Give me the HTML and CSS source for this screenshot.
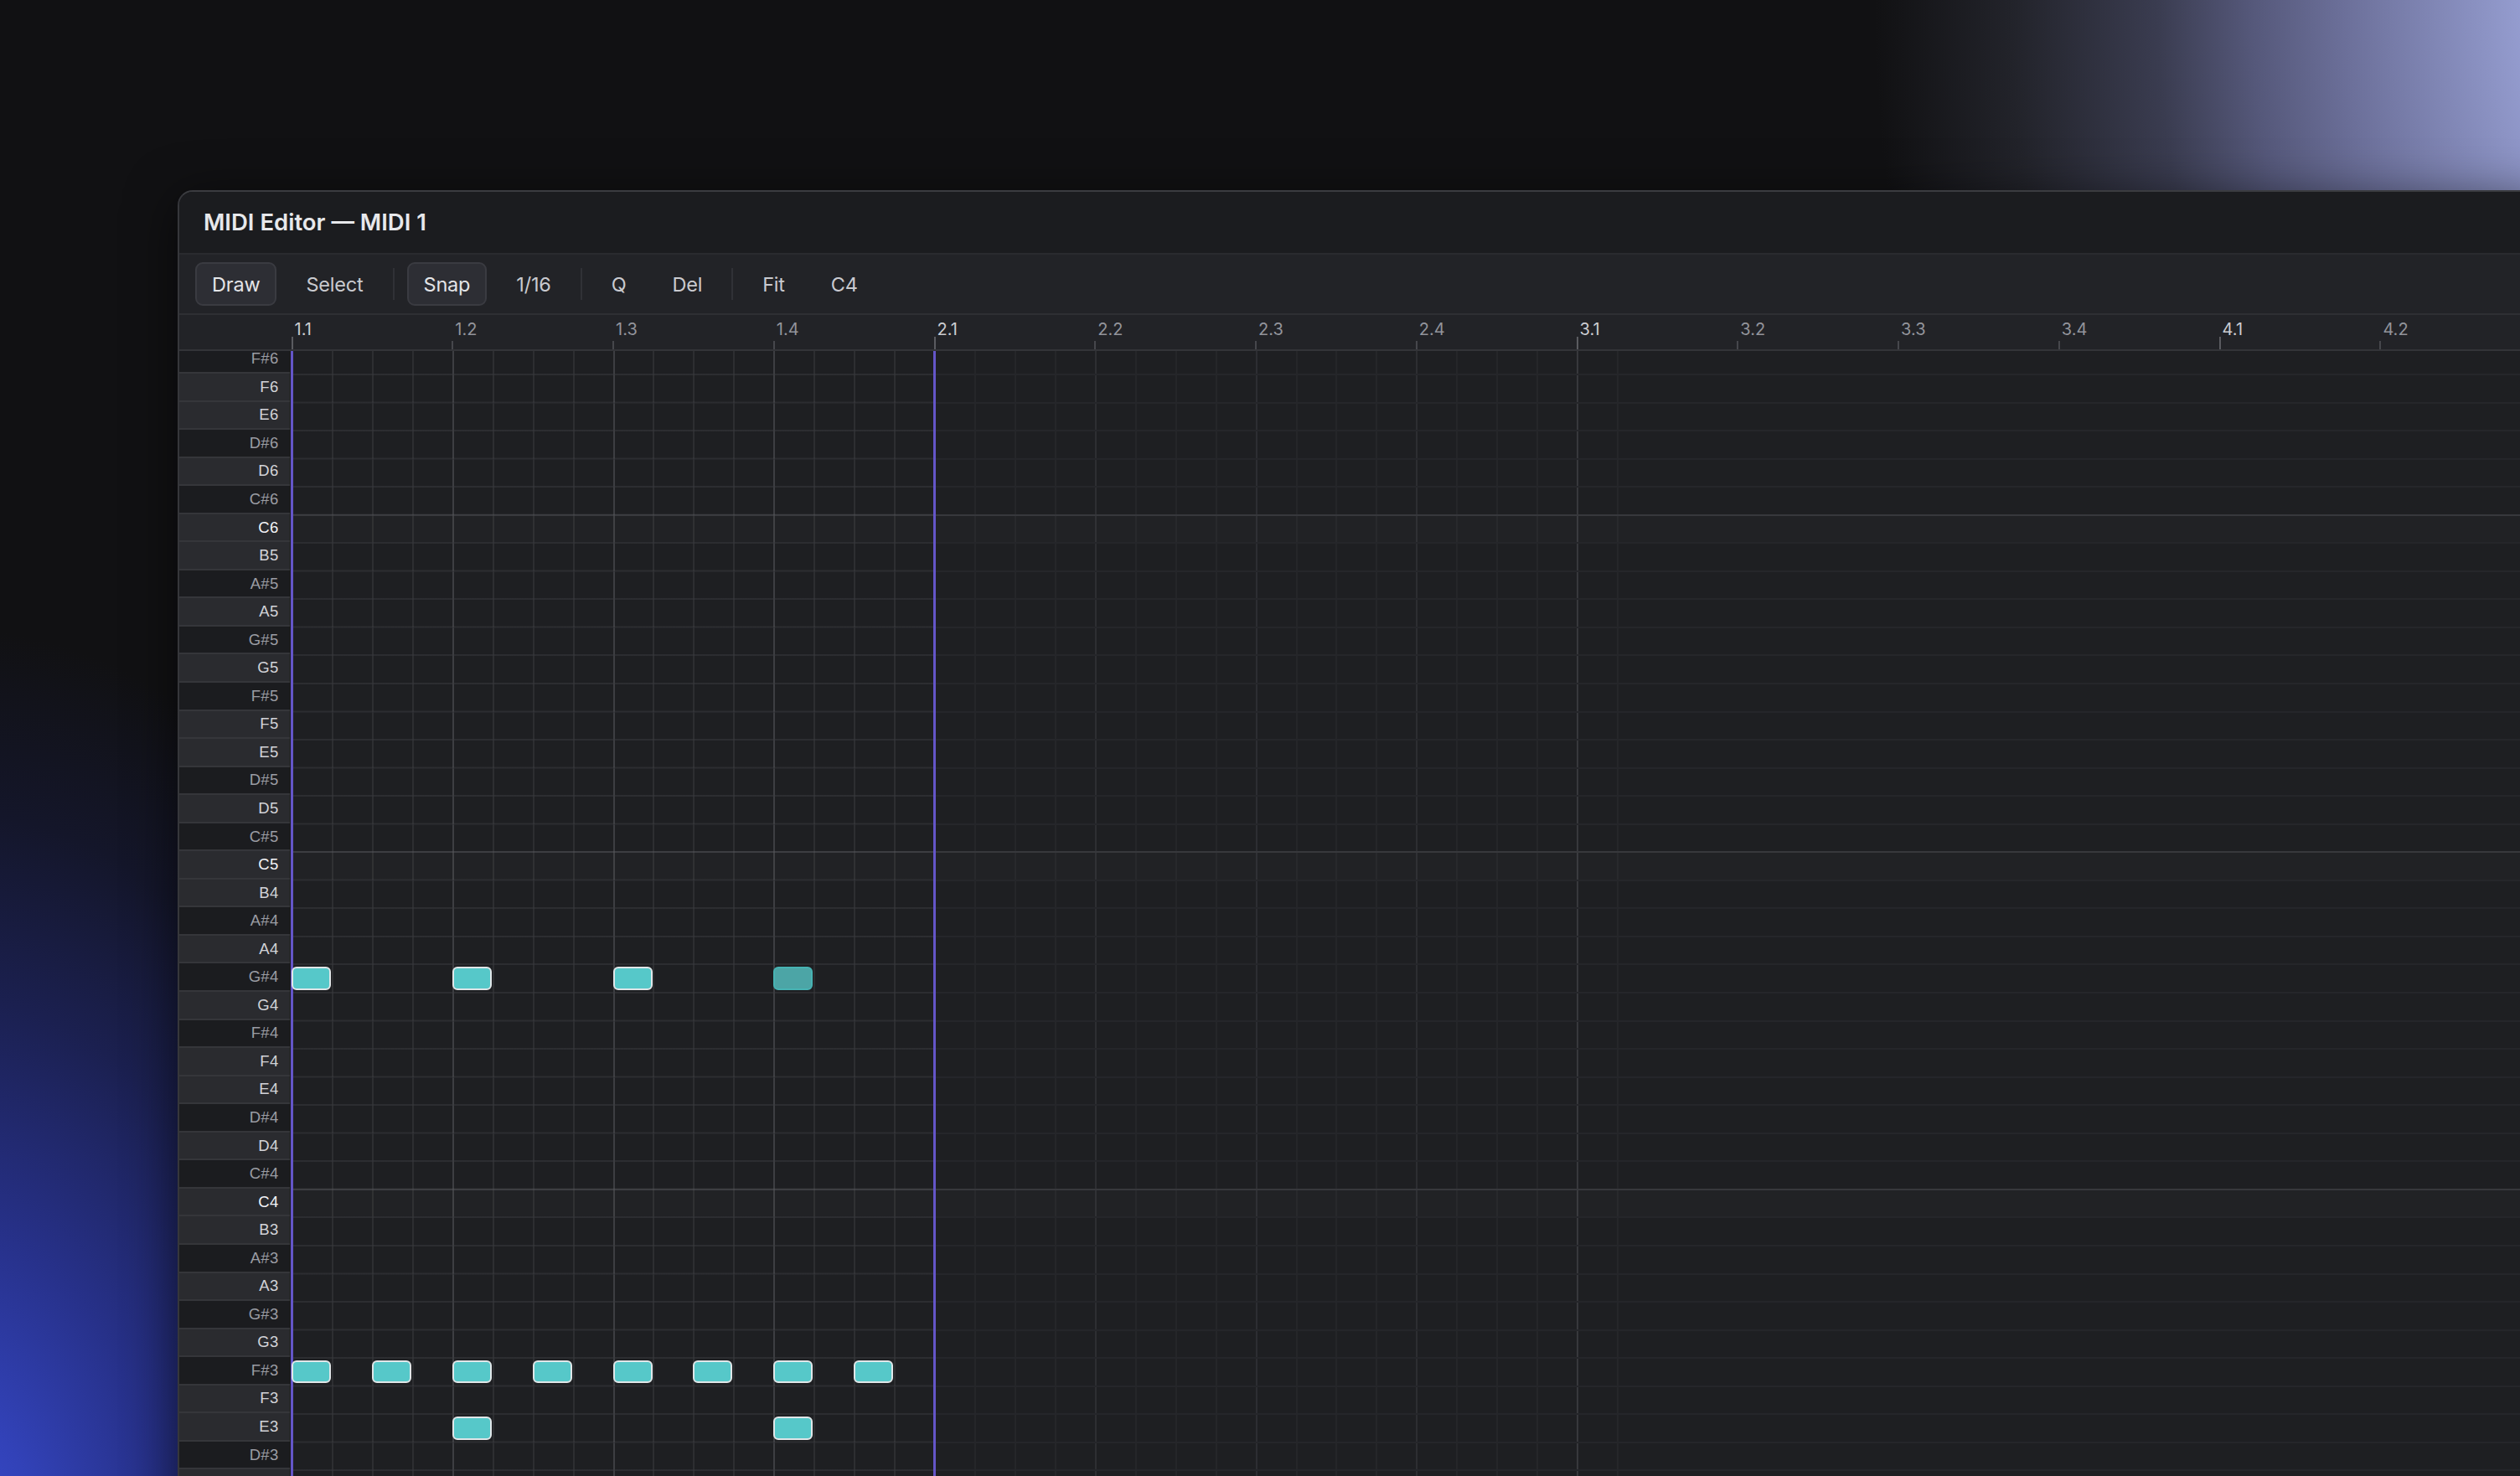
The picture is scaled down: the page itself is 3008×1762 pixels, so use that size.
FILE: index.html
```html
<!DOCTYPE html>
<html lang="en">
<head>
    <meta charset="UTF-8">
    <meta name="viewport" content="width=device-width, initial-scale=1.0">
    <title>MIDI Editor — MIDI 1</title>
    <link rel="stylesheet" href="styles.css">
</head>
<body>
    <div class="window">
        <div class="titlebar">
            <h1 class="title">MIDI Editor — MIDI 1</h1>
        </div>

        <div class="toolbar">
            <button class="tool active">Draw</button>
            <button class="tool">Select</button>
            <span class="sep"></span>
            <button class="tool active">Snap</button>
            <button class="tool">1/16</button>
            <span class="sep"></span>
            <button class="tool">Q</button>
            <button class="tool">Del</button>
            <span class="sep"></span>
            <button class="tool">Fit</button>
            <button class="tool">C4</button>
        </div>

        <div class="ruler">
            <div class="ruler-spacer"></div>
            <div class="ruler-marks" id="ruler"></div>
        </div>

        <div class="roll">
            <div class="roll-inner">
                <div class="keys" id="keys"></div>
                <div class="lanes" id="lanes">
                    <div class="loop"></div>
                </div>
            </div>
        </div>
    </div>

    <script>
        const ROW_H = 33.55;
        const STEP_W = 47.94;   // one 16th note
        const TOP_NOTE = 90;    // F#6
        const ROWS = 41;
        const BEATS = 14;
        const NAMES = ['C', 'C#', 'D', 'D#', 'E', 'F', 'F#', 'G', 'G#', 'A', 'A#', 'B'];

        // pitch, 16th step, selected
        const notes = [
            [68, 0, true], [68, 4, true], [68, 8, true], [68, 12, false],
            [54, 0, true], [54, 2, true], [54, 4, true], [54, 6, true],
            [54, 8, true], [54, 10, true], [54, 12, true], [54, 14, true],
            [52, 4, true], [52, 12, true]
        ];

        // Piano keys + lanes
        let keysHtml = '';
        let lanesHtml = '';
        for (let i = 0; i < ROWS; i++) {
            const pitch = TOP_NOTE - i;
            const name = NAMES[pitch % 12] + (Math.floor(pitch / 12) - 1);
            let cls = 'key';
            if (name.includes('#')) cls += ' black';
            if (pitch % 12 === 0) cls += ' c';
            keysHtml += `<div class="${cls}">${name}</div>`;
            lanesHtml += `<div class="lane${pitch % 12 === 0 ? ' lane-c' : ''}"></div>`;
        }
        document.getElementById('keys').innerHTML = keysHtml;

        const lanes = document.getElementById('lanes');
        lanes.insertAdjacentHTML('afterbegin', lanesHtml);

        notes.forEach(([pitch, step, selected]) => {
            const top = (TOP_NOTE - pitch) * ROW_H + 3.5;
            const left = step * STEP_W + 0.5;
            lanes.insertAdjacentHTML('beforeend',
                `<div class="note${selected ? ' selected' : ''}" style="left:${left}px;top:${top}px"></div>`);
        });

        // Ruler: one mark per beat
        let rulerHtml = '';
        for (let b = 0; b < BEATS; b++) {
            const x = b * STEP_W * 4;
            const isBar = b % 4 === 0;
            const label = `${Math.floor(b / 4) + 1}.${b % 4 + 1}`;
            rulerHtml += `<div class="tick${isBar ? ' bar' : ''}" style="left:${x}px"></div>`;
            rulerHtml += `<span class="mark${isBar ? ' bar' : ''}" style="left:${x + 4}px">${label}</span>`;
        }
        document.getElementById('ruler').innerHTML = rulerHtml;
    </script>
</body>
</html>
```

FILE: styles.css
```css
* {
    box-sizing: border-box;
}
html, body {
    height: 100%;
}
body {
    margin: 0;
    padding: 227px 0 0 212px;
    overflow: hidden;
    font-family: 'Inter', 'Liberation Sans', sans-serif;
    background-color: #111113;
    background-image:
        radial-gradient(1250px 1600px at 3300px 0px, #a3aadd 0%, #959dd0 23%, #6c709a 40%, #55587a 49%, #3a3c50 58%, #22232a 72%, rgba(17,17,19,0) 85%),
        radial-gradient(700px 1100px at -60px 1850px, #3a4cd0 0%, #3242b8 15%, #27318a 35%, #1b2050 60%, #14162a 80%, rgba(17,17,19,0) 100%);
}
.window {
    width: 2830px;
    height: 1600px;
    display: flex;
    flex-direction: column;
    background: #1e1f22;
    border-top: 2px solid #3b3c40;
    border-left: 2px solid #36373b;
    border-radius: 18px 0 0 0;
    box-shadow: 0 10px 60px rgba(0,0,0,0.55);
    overflow: hidden;
}
.titlebar {
    height: 73px;
    flex: none;
    display: flex;
    align-items: center;
    padding: 0 0 2px 29px;
    background: #1b1c1f;
}
.title {
    margin: 0;
    font-size: 27.5px;
    font-weight: 600;
    color: #e7e8eb;
}
.toolbar {
    height: 74px;
    flex: none;
    display: flex;
    align-items: center;
    gap: 15px;
    padding-left: 19px;
    background: #222327;
    border-top: 2px solid #2a2b2f;
    border-bottom: 2px solid #2e2f33;
}
.tool {
    height: 52px;
    padding: 0 18px;
    border: 2px solid transparent;
    border-radius: 9px;
    background: transparent;
    font-family: inherit;
    font-size: 23.5px;
    letter-spacing: -0.2px;
    color: #c9cacf;
    cursor: pointer;
}
.tool.active {
    background: #2d2e34;
    border-color: #3a3b41;
    color: #e4e5e8;
}
.sep {
    width: 2px;
    height: 38px;
    background: #303136;
}
.ruler {
    height: 43px;
    flex: none;
    display: flex;
    background: #222327;
    border-bottom: 2px solid #333438;
}
.ruler-spacer {
    width: 133.5px;
    flex: none;
}
.ruler-marks {
    position: relative;
    flex: 1;
}
.tick {
    position: absolute;
    bottom: 0;
    width: 2px;
    height: 10px;
    background: #46474c;
}
.tick.bar {
    height: 15px;
    background: #5a5b60;
}
.mark {
    position: absolute;
    top: 7px;
    font-size: 20px;
    line-height: 20px;
    color: #92949b;
    white-space: nowrap;
}
.mark.bar {
    color: #cbccd1;
}
.roll {
    flex: 1;
    overflow: hidden;
    background: #1e1f22;
}
.roll-inner {
    display: flex;
    margin-top: -6.55px;
}
.keys {
    width: 133.5px;
    flex: none;
    background: #18191c;
    border-right: 2px solid #18191c;
}
.key {
    height: 33.55px;
    display: flex;
    align-items: center;
    justify-content: flex-end;
    padding-right: 13px;
    background: #2a2b2f;
    border-bottom: 2px solid #35363a;
    font-family: 'Liberation Sans', Arial, sans-serif;
    font-size: 18.5px;
    letter-spacing: 0.3px;
    color: #d2d3d8;
}
.key.black {
    background: #1b1c1f;
    color: #9b9da4;
}
.key.c {
    color: #f3f4f7;
}
.lanes {
    flex: 1;
    position: relative;
    background-color: #1e1f22;
    background-image:
        repeating-linear-gradient(90deg, #37383c 0 2px, transparent 2px 767.04px),
        repeating-linear-gradient(90deg, #2d2e32 0 2px, transparent 2px 191.76px),
        repeating-linear-gradient(90deg, #252629 0 2px, transparent 2px 47.94px);
    background-size: 1584px 100%;
    background-repeat: no-repeat;
}
.lane {
    height: 33.55px;
    border-top: 2px solid #25262a;
}
.lane-c {
    border-top-color: #37383c;
    background: rgba(255,255,255,0.014);
}
.loop {
    position: absolute;
    top: 0;
    bottom: 0;
    left: 0;
    width: 767.04px;
    background-image:
        repeating-linear-gradient(90deg, rgba(255,255,255,0.045) 0 2px, transparent 2px 191.76px),
        repeating-linear-gradient(90deg, rgba(255,255,255,0.035) 0 2px, transparent 2px 47.94px),
        repeating-linear-gradient(180deg, rgba(255,255,255,0.03) 0 2px, transparent 2px 33.55px);
}
.loop::before, .loop::after {
    content: '';
    position: absolute;
    top: 0;
    bottom: 0;
    width: 3px;
    background: #6456c8;
}
.loop::before {
    left: -0.5px;
}
.loop::after {
    left: 766px;
}
.note {
    position: absolute;
    width: 47px;
    height: 27.7px;
    border-radius: 6px;
    border: 2px solid #47b3b3;
    background: #4ca5a6;
}
.note.selected {
    background: #56c8c9;
    border-color: #e0e6e8;
}
```
